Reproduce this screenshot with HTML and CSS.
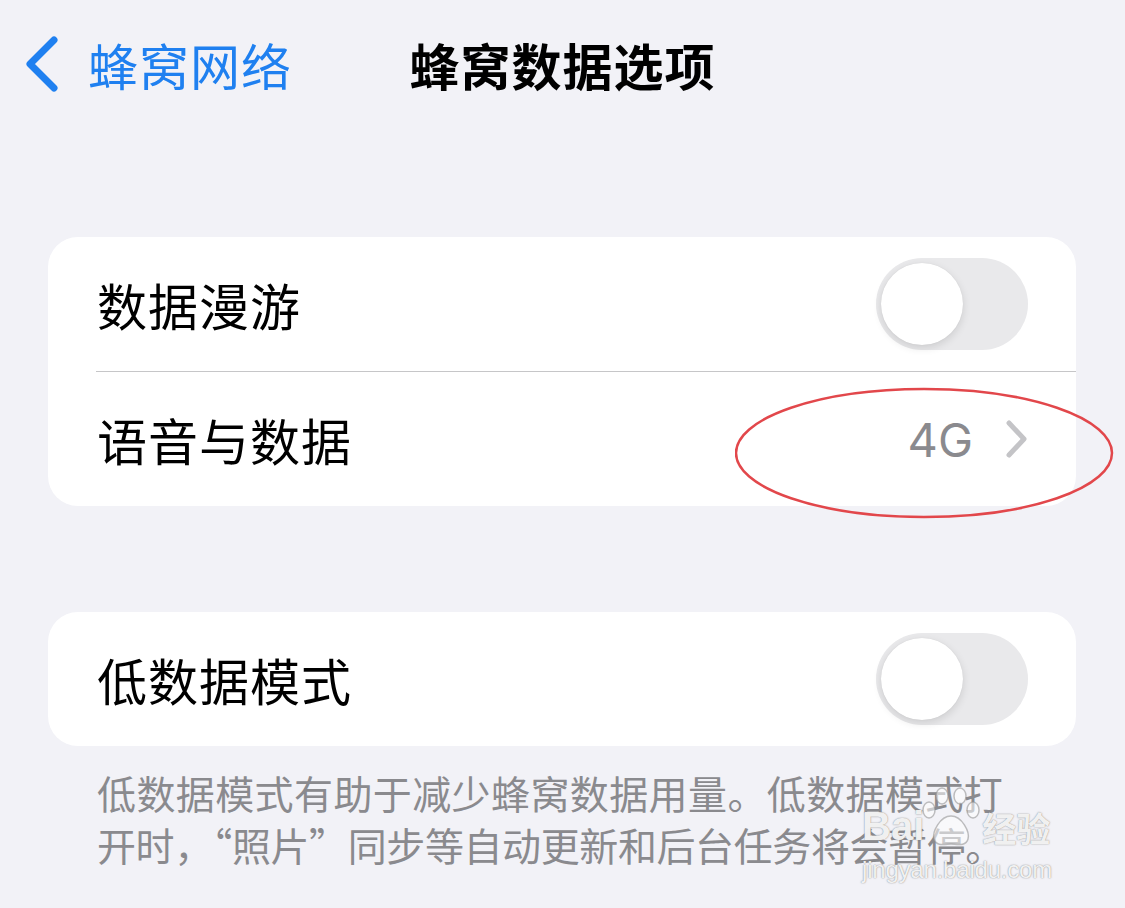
FILE: index.html
```html
<!DOCTYPE html>
<html lang="zh-CN">
<head>
<meta charset="utf-8">
<title>蜂窝数据选项</title>
<link rel="stylesheet" href="styles.css">
</head>
<body>
<div class="page">
  <header class="nav">
    <div class="back">
      <svg class="back-chev" width="40" height="60" viewBox="0 0 40 60"><path d="M30 5 L6 29 L30 53" fill="none" stroke="#1f80f0" stroke-width="7" stroke-linecap="round" stroke-linejoin="round"/></svg>
      <span class="back-text">蜂窝网络</span>
    </div>
    <h1 class="title">蜂窝数据选项</h1>
    <div></div>
  </header>

  <main class="content">
    <section class="card first">
      <div class="row">
        <span class="label">数据漫游</span>
        <span class="toggle"><span class="knob"></span></span>
      </div>
      <div class="sep"></div>
      <div class="row">
        <span class="label">语音与数据</span>
        <span class="detail">
          <span class="value">4G</span>
          <svg class="chev" width="28" height="40" viewBox="0 0 28 40"><path d="M6 4 L21 20 L6 36" fill="none" stroke="#c4c4c7" stroke-width="5" stroke-linecap="round" stroke-linejoin="round"/></svg>
        </span>
      </div>
    </section>

    <section class="card second">
      <div class="row">
        <span class="label">低数据模式</span>
        <span class="toggle"><span class="knob"></span></span>
      </div>
    </section>
    <p class="footer">低数据模式有助于减少蜂窝数据用量。低数据模式打<br><span class="tight">开时，“照片”同步等自动更新和后台任务将会暂停。</span></p>
  </main>

  <svg class="ellipse" width="400" height="140" viewBox="0 0 400 140"><ellipse cx="189" cy="66" rx="188" ry="64" fill="none" stroke="#e2474b" stroke-width="2.5"/></svg>

  <div class="watermark">
    <div class="wm-top">
      <span class="wm-bai">Bai</span>
      <svg class="wm-paw" width="62" height="62" viewBox="0 0 62 62">
        <g fill="rgba(255,255,255,0.55)" stroke="rgba(140,140,140,0.55)" stroke-width="1.5">
          <ellipse cx="9" cy="24" rx="6" ry="8"/>
          <ellipse cx="22" cy="10" rx="6" ry="8"/>
          <ellipse cx="40" cy="10" rx="6" ry="8"/>
          <ellipse cx="53" cy="24" rx="6" ry="8"/>
          <path d="M31 30 C20 30 12 46 14 53 C16 61 26 58 31 58 C36 58 46 61 48 53 C50 46 42 30 31 30 Z"/>
        </g>
      </svg>
      <span class="wm-jy">经验</span>
    </div>
    <div class="wm-url">jingyan.baidu.com</div>
  </div>
</div>
</body>
</html>
```

FILE: styles.css
```css
* { box-sizing: border-box; }
html, body {
  margin: 0;
  padding: 0;
  background: #f2f2f7;
}
body {
  width: 1125px;
  height: 908px;
  overflow: hidden;
  font-family: "Noto Sans CJK SC", "Noto Sans", sans-serif;
}
.page {
  position: relative;
  width: 1125px;
  height: 908px;
}
.nav {
  height: 134px;
  padding-bottom: 6px;
  display: grid;
  grid-template-columns: 1fr auto 1fr;
  align-items: center;
}
.back {
  display: flex;
  align-items: center;
  padding-left: 24px;
}
.back-chev {
  display: block;
  margin-right: 24px;
  margin-top: 2px;
}
.back-text {
  color: #1f80f0;
  font-size: 50px;
  line-height: 60px;
  letter-spacing: 1px;
}
.title {
  margin: 0;
  font-size: 50px;
  line-height: 60px;
  font-weight: 700;
  color: #000;
  letter-spacing: 1px;
}
.content {
  padding: 0 49px 0 48px;
}
.card {
  background: #fff;
  border-radius: 30px;
  overflow: hidden;
}
.card.first { margin-top: 103px; }
.card.second { margin-top: 106px; }
.row {
  height: 134px;
  display: flex;
  align-items: center;
  justify-content: space-between;
  padding: 0 48px 0 49px;
}
.label {
  font-size: 50px;
  line-height: 60px;
  color: #000;
  letter-spacing: 1px;
}
.sep {
  height: 1px;
  background: #c6c6c8;
  margin-left: 48px;
}
.toggle {
  position: relative;
  width: 152px;
  height: 92px;
  border-radius: 46px;
  background: #e9e9eb;
}
.knob {
  position: absolute;
  left: 5px;
  top: 5px;
  width: 82px;
  height: 82px;
  border-radius: 50%;
  background: #fff;
  box-shadow: 0 3px 8px rgba(0,0,0,0.12), 0 0 1px rgba(0,0,0,0.1);
}
.detail {
  display: flex;
  align-items: center;
}
.value {
  font-family: "Inter", "Noto Sans", sans-serif;
  font-size: 47px;
  color: #8a8a8e;
  margin-right: 30px;
}
.chev { display: block; margin-right: -3px; }
.footer {
  margin: 20px 0 0;
  padding: 0 0 0 49px;
  font-size: 39px;
  line-height: 52px;
  color: #8a8a8e;
  letter-spacing: 0.4px;
  white-space: nowrap;
}
.tight { letter-spacing: -0.4px; }
.ellipse {
  position: absolute;
  left: 735px;
  top: 387px;
}
.watermark {
  position: absolute;
  left: 862px;
  top: 784px;
  width: 205px;
  color: rgba(255,255,255,0.9);
  text-shadow: 0 0 1px rgba(120,120,120,0.8), 0 0 2px rgba(120,120,120,0.4);
}
.wm-top {
  display: flex;
  align-items: flex-end;
  height: 66px;
}
.wm-bai {
  font-family: "Liberation Sans", sans-serif;
  font-size: 40px;
  font-weight: 700;
  line-height: 40px;
  margin-bottom: 4px;
}
.wm-paw { display: block; margin: 0 0 2px -4px; }
.wm-jy {
  font-size: 34px;
  line-height: 40px;
  font-weight: 700;
  margin-bottom: 2px;
}
.wm-url {
  font-family: "Liberation Sans", sans-serif;
  font-size: 24px;
  line-height: 28px;
  margin-top: 6px;
  letter-spacing: -0.2px;
}
```
